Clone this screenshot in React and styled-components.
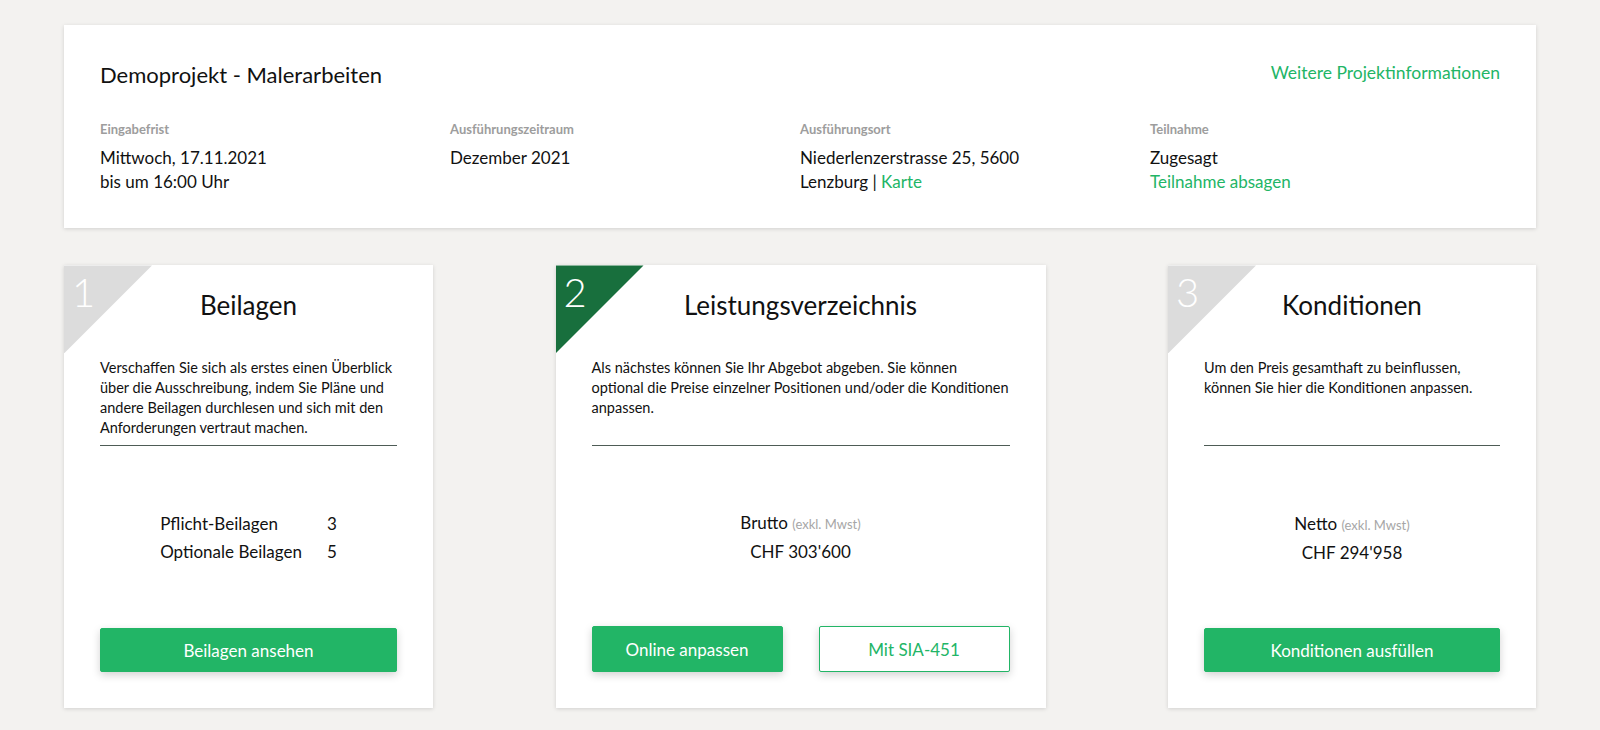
import React from "react"
import styled, { createGlobalStyle } from "styled-components"

const GlobalStyle = createGlobalStyle`
  html, body {
    margin: 0;
    padding: 0;
    background: #f3f2f0;
    font-family: Lato, "Open Sans", sans-serif;
    color: #111;
  }
`

const Page = styled.div`
  padding: 25px 64px 23px;
  display: flex;
  flex-direction: column;
  gap: 37px;
`

const InfoCard = styled.section`
  background: #fff;
  box-shadow: 0 1px 4px rgba(0, 0, 0, 0.14);
  padding: 37px 36px 34px;
`

const HeadRow = styled.div`
  display: flex;
  justify-content: space-between;
  align-items: flex-start;
`

const ProjectTitle = styled.h1`
  margin: 0;
  font-size: 22px;
  font-weight: 400;
  line-height: 1.2;
`

const Link = styled.a`
  color: #22b566;
  text-decoration: none;
  font-size: ${(p) => (p.$big ? "17.5px" : "inherit")};
  cursor: pointer;
`

const InfoGrid = styled.div`
  display: grid;
  grid-template-columns: repeat(4, 1fr);
  margin-top: 33px;
`

const InfoLabel = styled.div`
  font-size: 13px;
  font-weight: 700;
  color: #9d9d9d;
  line-height: 16px;
  margin-bottom: 9px;
`

const InfoValue = styled.div`
  font-size: 17px;
  line-height: 24px;
`

const CardRow = styled.div`
  display: flex;
  justify-content: space-between;
  align-items: flex-start;
`

const StepCard = styled.section`
  position: relative;
  width: ${(p) => p.$width}px;
  height: 443px;
  box-sizing: border-box;
  background: #fff;
  box-shadow: 0 1px 4px rgba(0, 0, 0, 0.14);
  padding: 25px 36px 36px;
  display: flex;
  flex-direction: column;
  overflow: hidden;
`

const Corner = styled.div`
  position: absolute;
  top: 0;
  left: 0;
  width: 88px;
  height: 88px;
  background: ${(p) => (p.$active ? "#186f3d" : "#dcdcdc")};
  clip-path: polygon(0 0, 100% 0, 0 100%);
`

const StepNumber = styled.span`
  position: absolute;
  top: 3px;
  left: 8px;
  color: #fff;
  font-size: 40px;
  font-weight: 300;
  line-height: 1.2;
`

const StepTitle = styled.h2`
  margin: 0;
  text-align: center;
  font-size: 26px;
  font-weight: 400;
  line-height: 1.2;
`

const Description = styled.p`
  margin: 36px 0 0;
  height: 87px;
  font-size: 14.5px;
  line-height: 20px;
`

const Divider = styled.hr`
  margin: 0;
  border: 0;
  border-top: 1px solid #4e5c56;
`

const Summary = styled.div`
  flex: 1;
  display: flex;
  flex-direction: column;
  align-items: center;
  justify-content: center;
  font-size: 17px;
  line-height: 28px;
  padding-top: 3px;
`

const CountTable = styled.div`
  display: grid;
  grid-template-columns: auto auto;
  column-gap: 25px;
`

const Muted = styled.span`
  font-size: 13px;
  color: #a6a6a6;
`

const Actions = styled.div`
  display: flex;
  gap: 36px;
`

const Button = styled.button`
  flex: 1;
  height: ${(p) => (p.$tall ? 46 : 44)}px;
  border-radius: 2px;
  font-family: inherit;
  font-size: 17px;
  cursor: pointer;
  border: 1px solid #22b566;
  background: ${(p) => (p.$outline ? "#fff" : "#22b566")};
  color: ${(p) => (p.$outline ? "#22b566" : "#fff")};
  box-shadow: 0 3px 8px rgba(0, 0, 0, 0.18);
`

const info = [
  { label: "Eingabefrist", value: <>Mittwoch, 17.11.2021<br />bis um 16:00 Uhr</> },
  { label: "Ausführungszeitraum", value: "Dezember 2021" },
  {
    label: "Ausführungsort",
    value: <>Niederlenzerstrasse 25, 5600<br />Lenzburg | <Link>Karte</Link></>,
  },
  { label: "Teilnahme", value: <>Zugesagt<br /><Link>Teilnahme absagen</Link></> },
]

const App = () => (
  <>
    <GlobalStyle />
    <Page>
      <InfoCard>
        <HeadRow>
          <ProjectTitle>Demoprojekt - Malerarbeiten</ProjectTitle>
          <Link $big>Weitere Projektinformationen</Link>
        </HeadRow>
        <InfoGrid>
          {info.map((i) => (
            <div key={i.label}>
              <InfoLabel>{i.label}</InfoLabel>
              <InfoValue>{i.value}</InfoValue>
            </div>
          ))}
        </InfoGrid>
      </InfoCard>

      <CardRow>
        <StepCard $width={369}>
          <Corner />
          <StepNumber>1</StepNumber>
          <StepTitle>Beilagen</StepTitle>
          <Description>
            Verschaffen Sie sich als erstes einen Überblick über die Ausschreibung, indem Sie Pläne und
            andere Beilagen durchlesen und sich mit den Anforderungen vertraut machen.
          </Description>
          <Divider />
          <Summary>
            <CountTable>
              <span>Pflicht-Beilagen</span>
              <span>3</span>
              <span>Optionale Beilagen</span>
              <span>5</span>
            </CountTable>
          </Summary>
          <Actions>
            <Button>Beilagen ansehen</Button>
          </Actions>
        </StepCard>

        <StepCard $width={490}>
          <Corner $active />
          <StepNumber>2</StepNumber>
          <StepTitle>Leistungsverzeichnis</StepTitle>
          <Description>
            Als nächstes können Sie Ihr Abgebot abgeben. Sie können optional die Preise einzelner
            Positionen und/oder die Konditionen anpassen.
          </Description>
          <Divider />
          <Summary>
            <div>Brutto <Muted>(exkl. Mwst)</Muted></div>
            <div>CHF 303'600</div>
          </Summary>
          <Actions>
            <Button $tall>Online anpassen</Button>
            <Button $tall $outline>Mit SIA-451</Button>
          </Actions>
        </StepCard>

        <StepCard $width={368}>
          <Corner />
          <StepNumber>3</StepNumber>
          <StepTitle>Konditionen</StepTitle>
          <Description>
            Um den Preis gesamthaft zu beinflussen, können Sie hier die Konditionen anpassen.
          </Description>
          <Divider />
          <Summary>
            <div>Netto <Muted>(exkl. Mwst)</Muted></div>
            <div>CHF 294'958</div>
          </Summary>
          <Actions>
            <Button>Konditionen ausfüllen</Button>
          </Actions>
        </StepCard>
      </CardRow>
    </Page>
  </>
)

export default App
